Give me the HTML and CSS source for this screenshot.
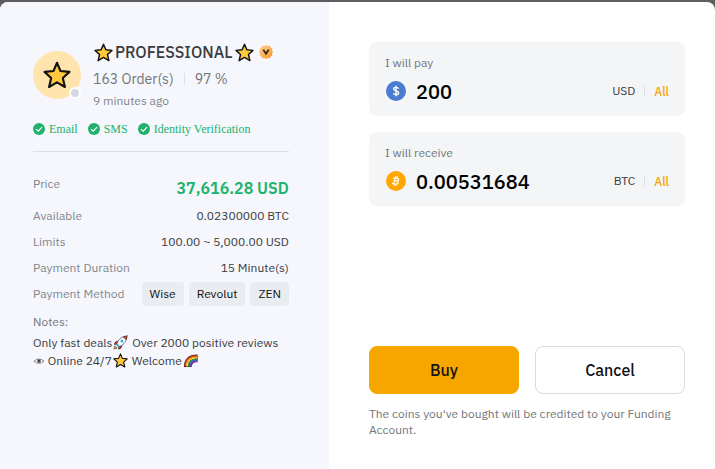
FILE: index.html
```html
<!DOCTYPE html>
<html lang="en">
<head>
    <meta charset="UTF-8">
    <meta name="viewport" content="width=device-width, initial-scale=1.0">
    <title>Buy BTC</title>
    <link rel="stylesheet" href="styles.css">
</head>
<body>
    <!-- Shared icons -->
    <svg class="icon-defs" aria-hidden="true">
        <symbol id="star" viewBox="0 0 24 24">
            <path d="M12 1.5 L15 8.6 L22.7 9.3 L17 14.5 L18.8 22.3 L12 18.3 L5.2 22.3 L7 14.5 L1.3 9.3 L9 8.6 Z" fill="#ffc83d" stroke="#111" stroke-width="1.8" stroke-linejoin="round"/>
        </symbol>
        <symbol id="check" viewBox="0 0 12 12">
            <circle cx="6" cy="6" r="6" fill="#20b26c"/>
            <path d="M3 6.1 L5.2 8.2 L9.1 4.2" fill="none" stroke="#fff" stroke-width="1.2"/>
        </symbol>
    </svg>

    <div class="dialog">
        <section class="seller">
            <div class="profile">
                <div class="avatar">
                    <svg class="avatar-star"><use href="#star"/></svg>
                    <span class="status"></span>
                </div>
                <div class="profile-info">
                    <div class="name">
                        <svg class="name-star"><use href="#star"/></svg>
                        <span>PROFESSIONAL</span>
                        <svg class="name-star"><use href="#star"/></svg>
                        <svg class="badge" viewBox="0 0 14 14">
                            <defs>
                                <linearGradient id="gold" x1="0" y1="0" x2="1" y2="1">
                                    <stop offset="0" stop-color="#ffd09a"/>
                                    <stop offset="1" stop-color="#f7931e"/>
                                </linearGradient>
                            </defs>
                            <path d="M7 0 L8.7 1 L10.9 .8 L11.5 2.5 L13.5 3.4 L12.9 5.3 L14 7 L12.9 8.8 L13.5 10.6 L11.5 11.5 L10.9 13.2 L8.7 12.9 L7 14 L5.3 12.9 L3.1 13.2 L2.5 11.5 L.5 10.6 L1.1 8.8 L0 7 L1.1 5.3 L.5 3.4 L2.5 2.5 L3.1 .8 L5.3 1 Z" fill="url(#gold)"/>
                            <path d="M4.3 4.8 L7 8.8 L9.7 4.8" fill="none" stroke="#2c2419" stroke-width="1.7"/>
                        </svg>
                    </div>
                    <div class="orders">
                        <span>163 Order(s)</span>
                        <span class="divider"></span>
                        <span>97 %</span>
                    </div>
                    <div class="last-seen">9 minutes ago</div>
                </div>
            </div>

            <ul class="verified">
                <li><svg class="check"><use href="#check"/></svg>Email</li>
                <li><svg class="check"><use href="#check"/></svg>SMS</li>
                <li><svg class="check"><use href="#check"/></svg>Identity Verification</li>
            </ul>

            <dl class="details">
                <div class="row price-row">
                    <dt>Price</dt>
                    <dd class="price">37,616.28 USD</dd>
                </div>
                <div class="row">
                    <dt>Available</dt>
                    <dd>0.02300000 BTC</dd>
                </div>
                <div class="row">
                    <dt>Limits</dt>
                    <dd>100.00 ~ 5,000.00 USD</dd>
                </div>
                <div class="row">
                    <dt>Payment Duration</dt>
                    <dd>15 Minute(s)</dd>
                </div>
                <div class="row">
                    <dt>Payment Method</dt>
                    <dd class="methods">
                        <span class="tag">Wise</span>
                        <span class="tag">Revolut</span>
                        <span class="tag">ZEN</span>
                    </dd>
                </div>
            </dl>

            <div class="notes">
                <h2>Notes:</h2>
                <p>Only fast deals<svg class="emoji" viewBox="0 0 16 16">
                    <path d="M5.5 6.5 L2.5 7.5 L1.5 10 L4.5 9.6 M9.5 10.5 L8.5 14 L6 15 L6.3 11.5" fill="#e8402a" stroke="#111" stroke-width=".7" stroke-linejoin="round"/>
                    <path d="M1 15 L2 11.5 L4.5 14 Z" fill="#ffb02e" stroke="#111" stroke-width=".5"/>
                    <path d="M4 10 Q6 3 12 1.5 L14.5 4 Q13 10 6.5 12.5 Z" fill="#fff" stroke="#222" stroke-width=".6"/>
                    <path d="M11 2 L15.3 .7 L14 5 Z" fill="#e8402a" stroke="#111" stroke-width=".6" stroke-linejoin="round"/>
                    <circle cx="9.5" cy="6.5" r="1.6" fill="#38a9e4"/>
                    <path d="M4 10 L6.5 12.5" stroke="#38a9e4" stroke-width="2"/>
                </svg> Over 2000 positive reviews</p>
                <p><svg class="eye" viewBox="0 0 11 10">
                    <path d="M.5 5.2 Q5.5 .8 10.5 5.2 Q5.5 9.4 .5 5.2 Z" fill="#fff" stroke="#777" stroke-width=".9"/>
                    <circle cx="5.5" cy="5" r="2" fill="#777"/>
                    <circle cx="5.5" cy="5" r="1" fill="#333"/>
                </svg> Online 24/7<svg class="emoji"><use href="#star"/></svg> Welcome<svg class="emoji" viewBox="0 0 16 16">
                    <path d="M1 15 Q1 1.5 15.5 1.5 L15.5 9.5 Q9.5 9.5 8.8 15 Z" fill="#111"/>
                    <g fill="none" stroke-width="1.4">
                        <path d="M2.2 14.5 Q2.2 3 15 2.9" stroke="#e8352b"/>
                        <path d="M3.5 14.5 Q3.5 4.2 15 4.1" stroke="#ff9a1f"/>
                        <path d="M4.7 14.5 Q4.7 5.4 15 5.3" stroke="#ffe02e"/>
                        <path d="M5.9 14.5 Q5.9 6.6 15 6.5" stroke="#29a745"/>
                        <path d="M7 14.5 Q7 7.8 15 7.7" stroke="#2f6fe4"/>
                        <path d="M8.2 14.5 Q8.2 9 15 8.8" stroke="#8a35b5"/>
                    </g>
                </svg></p>
            </div>
        </section>

        <form class="order">
            <div class="field">
                <label for="pay">I will pay</label>
                <div class="field-row">
                    <svg class="coin" viewBox="0 0 20 20">
                        <circle cx="10" cy="10" r="10" fill="#4a7dcf"/>
                        <path d="M12.6 7.7 Q12 6.4 10 6.4 Q7.6 6.4 7.6 8.1 Q7.6 9.5 10 9.9 Q12.6 10.4 12.6 12 Q12.6 13.7 10 13.7 Q7.9 13.7 7.3 12.3 M10 4.8 V15.3" fill="none" stroke="#fff" stroke-width="1.4"/>
                    </svg>
                    <input type="text" id="pay" value="200">
                    <span class="currency">USD</span>
                    <span class="divider"></span>
                    <button type="button" class="all">All</button>
                </div>
            </div>

            <div class="field">
                <label for="receive">I will receive</label>
                <div class="field-row">
                    <svg class="coin" viewBox="0 0 20 20">
                        <circle cx="10" cy="10" r="10" fill="#ffa600"/>
                        <path d="M7.4 6.8 L10.8 7.3 Q13 7.7 12.6 9 Q12.2 10.1 9.2 9.7 M8.2 9.6 L10.4 10 Q12.7 10.6 12.1 12 Q11.5 13.4 9 12.9 L6 12.4 M8.9 6.8 L7.7 12.7 M9.9 5 L9.5 6.8 M11.6 5.3 L11.2 7.1 M8.4 12.8 L8 14.6 M10.1 13 L9.8 14.9" fill="none" stroke="#fff" stroke-width="1.2"/>
                    </svg>
                    <input type="text" id="receive" value="0.00531684">
                    <span class="currency">BTC</span>
                    <span class="divider"></span>
                    <button type="button" class="all">All</button>
                </div>
            </div>

            <div class="actions">
                <button type="submit" class="btn buy">Buy</button>
                <button type="button" class="btn cancel">Cancel</button>
            </div>
            <p class="hint">The coins you've bought will be credited to your Funding Account.</p>
        </form>
    </div>
</body>
</html>
```
FILE: styles.css
```css
* {
    margin: 0;
    padding: 0;
    box-sizing: border-box;
}

body {
    min-height: 100vh;
    padding-top: 2px;
    background-color: #5e5e5e;
    font-family: 'IBM Plex Sans', 'Noto Sans', sans-serif;
    font-size: 12px;
    line-height: 18px;
    color: #121214;
}

button, input {
    font-family: inherit;
}

svg {
    flex-shrink: 0;
}

.icon-defs {
    display: none;
}

.dialog {
    display: grid;
    grid-template-columns: 46% minmax(0, 1fr);
    min-height: calc(100vh - 2px);
    background-color: #fff;
    border-radius: 8px 8px 0 0;
    overflow: hidden;
}

/* Seller panel */
.seller {
    padding: 38px 40px 40px 33px;
    background-color: #f5f7fc;
}

.profile {
    display: flex;
    align-items: center;
    gap: 12px;
}

.avatar {
    position: relative;
    display: flex;
    align-items: center;
    justify-content: center;
    width: 48px;
    height: 48px;
    flex-shrink: 0;
    border-radius: 50%;
    background-color: #ffe4ae;
}

.avatar-star {
    width: 28px;
    height: 28px;
}

.status {
    position: absolute;
    right: 0;
    bottom: 0;
    width: 12px;
    height: 12px;
    border: 2px solid #fff;
    border-radius: 50%;
    background-color: #d3d7e0;
}

.name {
    display: flex;
    align-items: center;
    gap: 2px;
    padding-left: 1px;
    font-size: 16px;
    font-weight: 500;
    line-height: 24px;
    color: #3a3a3c;
}

.name-star {
    width: 19px;
    height: 19px;
}

.badge {
    width: 14px;
    height: 14px;
    margin-left: 3px;
}

.orders {
    display: flex;
    align-items: center;
    gap: 10px;
    margin: 5px 0 3px;
    font-size: 14px;
    line-height: 20px;
    color: #71757a;
}

.divider {
    width: 1px;
    height: 12px;
    background-color: #dcdfe3;
}

.last-seen {
    color: #81858c;
}

.verified {
    display: flex;
    gap: 10px;
    padding: 11px 0 14px;
    border-bottom: 1px solid #dddfe2;
    font-family: 'Liberation Serif', serif;
    line-height: 16px;
    color: #20b26c;
    list-style: none;
}

.verified li {
    display: flex;
    align-items: center;
    gap: 4px;
}

.check {
    width: 12px;
    height: 12px;
}

.details {
    padding-top: 22px;
}

.row {
    display: flex;
    align-items: center;
    justify-content: space-between;
    height: 26px;
}

.price-row {
    align-items: flex-start;
    height: 29px;
    line-height: 20px;
}

dt {
    color: #81858c;
}

dd {
    color: #3a3a3c;
}

.price {
    font-size: 16px;
    font-weight: 600;
    line-height: 28px;
    color: #20b26c;
}

.methods {
    display: flex;
    gap: 5px;
}

.tag {
    padding: 3px 8px;
    border-radius: 4px;
    background-color: #e9ecf1;
    color: #121214;
}

.notes {
    padding-top: 6px;
    color: #3a3a3c;
}

.notes h2 {
    margin-bottom: 3px;
    font-size: 12px;
    font-weight: 400;
    color: #71757a;
}

.emoji {
    width: 15px;
    height: 15px;
    margin: 0 1px;
    vertical-align: -3px;
}

.eye {
    width: 12px;
    height: 10px;
    vertical-align: -1px;
}

/* Order form */
.order {
    display: flex;
    flex-direction: column;
    padding: 40px 30px 31px 40px;
}

.field {
    margin-bottom: 16px;
    padding: 12px 16px 6px;
    border-radius: 8px;
    background-color: #f3f5f7;
}

.field label {
    display: block;
    color: #71757a;
}

.field-row {
    display: flex;
    align-items: center;
    height: 38px;
    padding-left: 1px;
}

.coin {
    width: 20px;
    height: 20px;
}

.field input {
    flex: 1;
    min-width: 0;
    margin-left: 10px;
    border: none;
    outline: none;
    background: none;
    font-size: 20px;
    font-weight: 500;
    color: #000;
}

.currency {
    color: #3a3a3c;
}

.field .divider {
    margin: 0 9px;
}

.all {
    border: none;
    background: none;
    font-size: 12px;
    font-weight: 500;
    color: #f7a600;
    cursor: pointer;
}

.actions {
    display: flex;
    gap: 16px;
    margin-top: auto;
}

.btn {
    flex: 1;
    height: 48px;
    border: 1px solid #d8dadd;
    border-radius: 8px;
    background-color: #fff;
    font-size: 16px;
    font-weight: 500;
    color: #121214;
    cursor: pointer;
}

.buy {
    border-color: #f7a600;
    background-color: #f7a600;
}

.hint {
    margin-top: 12px;
    line-height: 16px;
    color: #71757a;
}
```
